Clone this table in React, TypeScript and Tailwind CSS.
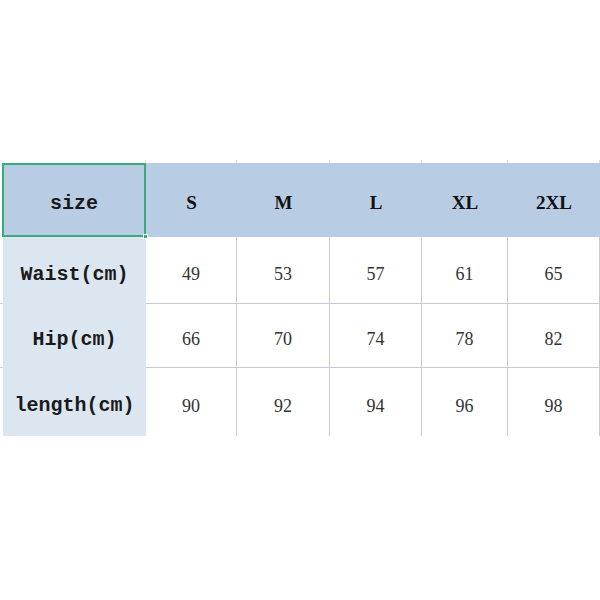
import React from "react";

const cols = ["w-[91px]", "w-[93px]", "w-[92px]", "w-[86px]", "w-[92px]"];
const sizes = ["S", "M", "L", "XL", "2XL"];
const rows = [
  { label: "Waist(cm)", h: "h-[67px]", values: ["49", "53", "57", "61", "65"] },
  { label: "Hip(cm)", h: "h-[64px]", values: ["66", "70", "74", "78", "82"] },
  { label: "length(cm)", h: "h-[68px]", values: ["90", "92", "94", "96", "98"] },
];

const mono = { fontFamily: '"Liberation Mono", "DejaVu Sans Mono", monospace' };
const serif = { fontFamily: '"Liberation Serif", "Times New Roman", serif' };

const App = () => {
  return (
    <main className="w-[600px] h-[600px] bg-white overflow-hidden pt-[160px]">
      {/* ticks of the row above */}
      <div className="flex h-[3px] pl-[3px]">
        <div className="w-[143px] shrink-0 border-r border-[#dcdce6]" />
        {cols.map((c, i) => (
          <div key={i} className={`${c} shrink-0 border-r border-[#dcdce6]`} />
        ))}
      </div>

      {/* Header */}
      <div className="flex h-[74px] pl-[3px] bg-white">
        <div className="relative w-[144px] shrink-0 bg-[#b8cce4] border-2 border-[#3caa78] -ml-[1px] flex items-center justify-center pt-[7px]">
          <span className="text-[20px] font-bold text-[#1a1a1a]" style={mono}>size</span>
          <span className="absolute -right-[4px] -bottom-[4px] w-[5px] h-[5px] bg-[#3caa78] border border-white" />
        </div>
        <div className="flex flex-1 bg-[#b8cce4]">
          {sizes.map((s, i) => (
            <div key={s} className={`${cols[i]} shrink-0 flex items-center justify-center pt-[7px]`}>
              <span className="text-[19px] font-bold text-[#111]" style={serif}>{s}</span>
            </div>
          ))}
        </div>
      </div>

      {/* Body rows */}
      {rows.map((r, ri) => (
        <div key={r.label} className={`flex ${r.h}`}>
          <div className={`w-[3px] shrink-0 ${ri < 2 ? "border-b" : ""} border-[#d0d0dc]`} />
          <div className="w-[143px] shrink-0 bg-[#dce6f1] flex items-center justify-center pt-[8px]">
            <span className="text-[20px] font-bold text-[#1a1a1a]" style={mono}>{r.label}</span>
          </div>
          {r.values.map((v, i) => (
            <div
              key={i}
              className={`${cols[i]} shrink-0 flex items-center justify-center pt-[8px] border-r ${ri < 2 ? "border-b" : ""} border-[#c8c8d8]`}
            >
              <span className="text-[18px] text-[#333]" style={serif}>{v}</span>
            </div>
          ))}
        </div>
      ))}
    </main>
  );
};

export default App;
